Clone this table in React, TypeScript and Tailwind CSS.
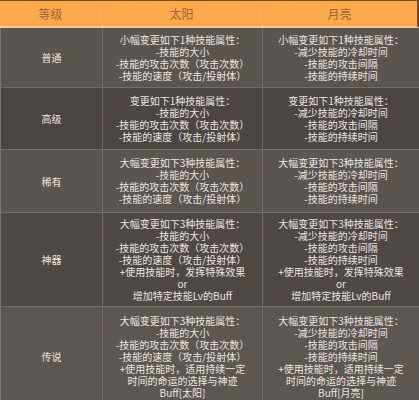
import React from "react";

type Row = { label: string; h: string; bg: string; sun: string[]; moon: string[] };

const sunBase = ["-技能的大小", "-技能的攻击次数（攻击次数）", "-技能的速度（攻击/投射体）"];
const moonBase = ["-减少技能的冷却时间", "-技能的攻击间隔", "-技能的持续时间"];

const rows: Row[] = [
  {
    label: "普通",
    h: "h-[60px]",
    bg: "bg-[#5b544f]",
    sun: ["小幅变更如下1种技能属性：", ...sunBase],
    moon: ["小幅变更如下1种技能属性：", ...moonBase],
  },
  {
    label: "高级",
    h: "h-[62px]",
    bg: "bg-[#4c4541]",
    sun: ["变更如下1种技能属性：", ...sunBase],
    moon: ["变更如下1种技能属性：", ...moonBase],
  },
  {
    label: "稀有",
    h: "h-[63px]",
    bg: "bg-[#5b544f]",
    sun: ["大幅变更如下3种技能属性：", ...sunBase],
    moon: ["大幅变更如下3种技能属性：", ...moonBase],
  },
  {
    label: "神器",
    h: "h-[94px]",
    bg: "bg-[#4f4844]",
    sun: ["大幅变更如下3种技能属性：", ...sunBase, "+使用技能时，发挥特殊效果", "or", "增加特定技能Lv的Buff"],
    moon: ["大幅变更如下3种技能属性：", ...moonBase, "+使用技能时，发挥特殊效果", "or", "增加特定技能Lv的Buff"],
  },
  {
    label: "传说",
    h: "h-[100px]",
    bg: "bg-[#5d5651]",
    sun: ["大幅变更如下3种技能属性：", ...sunBase, "+使用技能时，适用持续一定", "时间的命运的选择与神迹", "Buff[太阳]"],
    moon: ["大幅变更如下3种技能属性：", ...moonBase, "+使用技能时，适用持续一定", "时间的命运的选择与神迹", "Buff[月亮]"],
  },
];

function Lines({ lines }: { lines: string[] }) {
  return (
    <div className="flex flex-col items-center">
      {lines.map((l, i) => (
        <div key={i} className="whitespace-nowrap text-[10px] leading-[12px] text-[#ebe6e1]">
          {l}
        </div>
      ))}
    </div>
  );
}

export default function App() {
  return (
    <div className="w-[419px] h-[400px] overflow-hidden bg-[#5b544f] font-['Noto_Sans_CJK_SC','Noto_Sans',sans-serif]">
      <div className="grid grid-cols-[102px_160px_1fr] h-[28px] bg-[#fda94e] border-t border-t-[#7c4c1e] border-b-2 border-b-[#f4c58e] border-r-2 border-r-[#7a4a22]">
        <div className="flex items-center justify-center text-[12px] text-[#9a6434] border-r border-r-[#f2b26a]">等级</div>
        <div className="flex items-center justify-center text-[12px] text-[#9a6434] border-r border-r-[#f2b26a]">太阳</div>
        <div className="flex items-center justify-center text-[12px] text-[#9a6434]">月亮</div>
      </div>
      {rows.map((r) => (
        <div key={r.label} className={`grid grid-cols-[102px_160px_1fr] ${r.h} ${r.bg} border-b border-b-[#746c66] border-l border-l-[#7a726c]`}>
          <div className="flex items-center justify-center text-[10px] text-[#ebe6e1] border-r border-r-[#746c66]">{r.label}</div>
          <div className="flex items-center justify-center border-r border-r-[#746c66]">
            <Lines lines={r.sun} />
          </div>
          <div className="flex items-center justify-center">
            <Lines lines={r.moon} />
          </div>
        </div>
      ))}
    </div>
  );
}
